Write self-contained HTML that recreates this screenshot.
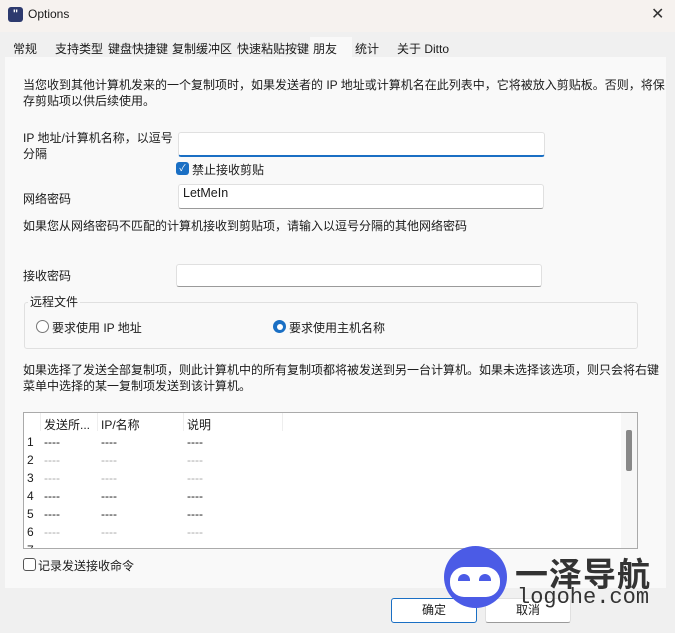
<!DOCTYPE html><html><head><meta charset="utf-8"><style>
*{margin:0;padding:0;box-sizing:border-box}
body{width:675px;height:633px;background:#f0f0f0;font-family:"Liberation Sans","Noto Sans CJK SC",sans-serif;font-size:12px;color:#1a1a1a;position:relative;overflow:hidden}
.a{position:absolute;white-space:nowrap}
.inp{position:absolute;background:#fff;border:1px solid #e0e0e0;border-bottom:1px solid #9a9a9a;border-radius:3px}
</style></head><body>
<div class="a" style="left:0;top:0;width:675px;height:32px;background:#f6f2ef"></div>
<div class="a" style="left:8px;top:7px;width:15px;height:15px;background:#2d3a6e;border-radius:3px;color:#fff;font-size:11px;font-weight:bold;text-align:center;line-height:14px">"</div>
<div class="a" style="left:28px;top:7px;font-size:12px">Options</div>
<div class="a" style="left:651px;top:4px;font-size:16px;color:#333">✕</div>
<div class="a" style="left:0;top:32px;width:675px;height:25px;background:#f0f0f0"></div>
<div class="a" style="left:310px;top:37px;width:42px;height:21px;background:#f9f9f9"></div>
<div class="a" style="left:13px;top:40px;font-size:12px">常规</div>
<div class="a" style="left:55px;top:40px">支持类型</div>
<div class="a" style="left:108px;top:40px">键盘快捷键</div>
<div class="a" style="left:172px;top:40px">复制缓冲区</div>
<div class="a" style="left:237px;top:40px">快速粘贴按键</div>
<div class="a" style="left:313px;top:40px">朋友</div>
<div class="a" style="left:355px;top:40px">统计</div>
<div class="a" style="left:397px;top:40px">关于 Ditto</div>
<div class="a" style="left:5px;top:57px;width:661px;height:531px;background:#f9f9f9"></div>
<div class="a" style="left:23px;top:77px;line-height:16px">当您收到其他计算机发来的一个复制项时，如果发送者的 IP 地址或计算机名在此列表中，它将被放入剪贴板。否则，将保<br>存剪贴项以供后续使用。</div>
<div class="a" style="left:23px;top:130px;line-height:16px">IP 地址/计算机名称，以逗号<br>分隔</div>
<div class="inp" style="left:178px;top:132px;width:367px;height:25px;border-bottom:2px solid #1a6fc4"></div>
<div class="a" style="left:176px;top:162px;width:13px;height:13px;background:#1a6fc4;border-radius:3px;color:#fff;font-size:9px;text-align:center;line-height:13px">✓</div>
<div class="a" style="left:192px;top:161px">禁止接收剪贴</div>
<div class="a" style="left:23px;top:190px">网络密码</div>
<div class="inp" style="left:178px;top:184px;width:366px;height:25px"></div>
<div class="a" style="left:183px;top:186px;font-size:12.5px">LetMeIn</div>
<div class="a" style="left:23px;top:217px">如果您从网络密码不匹配的计算机接收到剪贴项，请输入以逗号分隔的其他网络密码</div>
<div class="a" style="left:23px;top:267px">接收密码</div>
<div class="inp" style="left:176px;top:264px;width:366px;height:23px"></div>
<div class="a" style="left:24px;top:302px;width:614px;height:47px;border:1px solid #e0e0e0;border-radius:3px"></div>
<div class="a" style="left:28px;top:293px;background:#f9f9f9;padding:0 2px">远程文件</div>
<div class="a" style="left:36px;top:320px;width:13px;height:13px;border:1px solid #777;border-radius:50%;background:#fff"></div>
<div class="a" style="left:52px;top:319px">要求使用 IP 地址</div>
<div class="a" style="left:273px;top:320px;width:13px;height:13px;border-radius:50%;background:#1a6fc4"><div style="margin:3.5px;width:6px;height:6px;border-radius:50%;background:#fff"></div></div>
<div class="a" style="left:289px;top:319px">要求使用主机名称</div>
<div class="a" style="left:23px;top:362px;line-height:16px">如果选择了发送全部复制项，则此计算机中的所有复制项都将被发送到另一台计算机。如果未选择该选项，则只会将右键<br>菜单中选择的某一复制项发送到该计算机。</div>
<div class="a" style="left:23px;top:412px;width:615px;height:137px;background:#fff;border:1px solid #aaa;overflow:hidden">
<div class="a" style="left:16px;top:0;width:1px;height:18px;background:#eee"></div>
<div class="a" style="left:73px;top:0;width:1px;height:18px;background:#eee"></div>
<div class="a" style="left:159px;top:0;width:1px;height:18px;background:#eee"></div>
<div class="a" style="left:258px;top:0;width:1px;height:18px;background:#eee"></div>
<div class="a" style="left:20px;top:3px">发送所...</div><div class="a" style="left:77px;top:3px">IP/名称</div><div class="a" style="left:163px;top:3px">说明</div>
<div class="a" style="left:3px;top:20px;line-height:18px">1<br>2<br>3<br>4<br>5<br>6<br>7</div>
<div class="a" style="left:20px;top:20px;line-height:18px"><span>----</span><br><span style="color:#aaa">----</span><br><span style="color:#aaa">----</span><br>----<br>----<br><span style="color:#aaa">----</span></div>
<div class="a" style="left:77px;top:20px;line-height:18px"><span>----</span><br><span style="color:#aaa">----</span><br><span style="color:#aaa">----</span><br>----<br>----<br><span style="color:#aaa">----</span></div>
<div class="a" style="left:163px;top:20px;line-height:18px"><span>----</span><br><span style="color:#aaa">----</span><br><span style="color:#aaa">----</span><br>----<br>----<br><span style="color:#aaa">----</span></div>
<div class="a" style="left:597px;top:0;width:17px;height:137px;background:#f7f7f7"></div>
<div class="a" style="left:602px;top:17px;width:6px;height:41px;background:#888;border-radius:2px"></div>
</div>
<div class="a" style="left:23px;top:558px;width:13px;height:13px;border:1px solid #555;border-radius:3px;background:#fff"></div>
<div class="a" style="left:38px;top:557px">记录发送接收命令</div>
<div class="inp" style="left:391px;top:598px;width:86px;height:25px;border:1px solid #1a6fc4;text-align:center;line-height:23px">确定</div>
<div class="inp" style="left:485px;top:598px;width:86px;height:25px;text-align:center;line-height:23px">取消</div>
<div class="a" style="left:444px;top:546px;width:63px;height:62px;border-radius:50%;background:#4b5be6"></div>
<div class="a" style="left:450px;top:567px;width:50px;height:30px;border-radius:14px;background:#fff"></div>
<div class="a" style="left:458px;top:574px;width:12px;height:7px;border-radius:6px 6px 0 0;background:#4b5be6"></div>
<div class="a" style="left:479px;top:574px;width:12px;height:7px;border-radius:6px 6px 0 0;background:#4b5be6"></div>
<div class="a" style="left:515px;top:548px;font-size:33px;font-weight:bold;color:#333;letter-spacing:1px">一泽导航</div>
<div class="a" style="left:517px;top:585px;font-size:22px;color:#333;font-family:'Liberation Mono',monospace">logohe.com</div>
</body></html>
